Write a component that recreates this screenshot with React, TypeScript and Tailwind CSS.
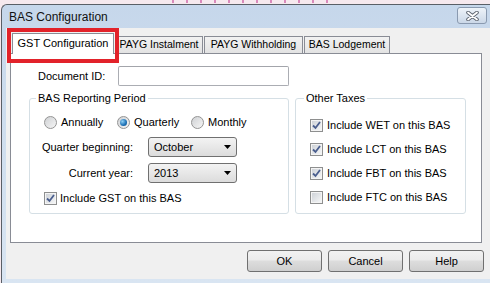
import React from "react";

function CheckBox({ checked }: { checked: boolean }) {
  return (
    <span className="flex h-[13px] w-[13px] shrink-0 items-center justify-center border border-[#8e8f8f] bg-white">
      <span className="flex h-[11px] w-[11px] items-center justify-center border border-[#f4f4f4] bg-gradient-to-br from-[#cfd3d8] to-[#f4f5f6]">
        {checked && (
          <svg width="9" height="9" viewBox="0 0 9 9">
            <path d="M1 4.5 L3.5 7 L8 1" fill="none" stroke="#4a5e8e" strokeWidth="1.8" />
          </svg>
        )}
      </span>
    </span>
  );
}

function Radio({ checked, label, width }: { checked: boolean; label: string; width: string }) {
  return (
    <div className={`flex items-center gap-[4px] ${width}`}>
      <span className="flex h-[13px] w-[13px] shrink-0 items-center justify-center rounded-full border border-[#949494] bg-gradient-to-br from-[#cfd1d4] to-[#f6f6f6]">
        {checked && (
          <span className="h-[7px] w-[7px] rounded-full bg-[radial-gradient(circle_at_35%_35%,#8fd0f5,#1a6fb5_60%,#0d4c86)]" />
        )}
      </span>
      <span>{label}</span>
    </div>
  );
}

function Combo({ value }: { value: string }) {
  return (
    <div className="flex h-[20px] w-[89px] items-center justify-between rounded-[3px] border border-[#707070] bg-gradient-to-b from-[#f3f3f3] to-[#dcdcdc] pl-[5px] pr-[5px]">
      <span>{value}</span>
      <svg width="7" height="4" viewBox="0 0 7 4">
        <polygon points="0,0 7,0 3.5,4" fill="#000" />
      </svg>
    </div>
  );
}

function Button({ label }: { label: string }) {
  return (
    <button
      type="button"
      className="flex h-[22px] w-[75px] items-center justify-center rounded-[3px] border border-[#707070] bg-[linear-gradient(#f2f2f2,#ebebeb_45%,#dddddd_50%,#cfcfcf)] text-[11px] text-black"
    >
      {label}
    </button>
  );
}

const tabs = [
  { label: "PAYG Instalment", w: "w-[88px]" },
  { label: "PAYG Withholding", w: "w-[99px]" },
  { label: "BAS Lodgement", w: "w-[86px]" },
];

export default function App() {
  return (
    <div className="h-[283px] w-[490px] overflow-hidden bg-[#f6e9ee] font-['Liberation_Sans',Arial,sans-serif] text-[11px] text-black">
      {/* desktop behind the dialog */}
      <div className="flex h-[4px] items-start gap-[12px] pl-[172px]">
        {[0, 1, 2, 3, 4, 5, 6, 7, 8, 9, 10, 11].map((i) => (
          <span key={i} className="h-[3px] w-[2px] bg-[#d98abb]" />
        ))}
      </div>

      <div className="ml-[1px] flex h-[279px] w-[489px] flex-col rounded-tl-[6px] border-l border-t border-[#5a5f66] bg-gradient-to-b from-[#c6d7eb] to-[#d9e5f2]">
        {/* title bar */}
        <div className="flex h-[23px] shrink-0 items-center pl-[7px]">
          <span className="text-[12px] text-[#111]">BAS Configuration</span>
          <div className="ml-auto mr-[3px] mt-[2px] flex h-[17px] w-[30px] items-center justify-center self-start rounded-[3px] border border-[#8a9ab0] bg-gradient-to-b from-[#eef3f9] to-[#cbd8e8]">
            <svg width="13" height="10" viewBox="0 0 13 10">
              <path d="M2 1.5 L11 8.5 M11 1.5 L2 8.5" stroke="#5d6470" strokeWidth="3.6" strokeLinecap="round" />
              <path d="M2 1.5 L11 8.5 M11 1.5 L2 8.5" stroke="#ffffff" strokeWidth="1.8" strokeLinecap="round" />
            </svg>
          </div>
        </div>

        {/* client area */}
        <div className="relative ml-[4px] flex h-[251px] flex-col bg-[#f0f0f0]">
          {/* red annotation around the active tab */}
          <div className="absolute left-[1px] top-0 z-20 h-[35px] w-[112px] border-[4px] border-[#e2222a]" />

          <div className="ml-[4px] mt-[5px] flex w-[472px] flex-col">
            {/* tab strip */}
            <div className="flex h-[20px] items-end pl-[2px]">
              <div className="relative z-10 -mb-px flex h-[21px] w-[102px] items-center justify-center border border-b-0 border-[#898c95] bg-white pb-[2px] text-[11px]">
                GST Configuration
              </div>
              {tabs.map((t) => (
                <div
                  key={t.label}
                  className={`ml-[1px] flex h-[17px] items-center justify-center border border-b-0 border-[#898c95] bg-gradient-to-b from-[#f2f2f2] to-[#e3e3e3] text-[10.5px] ${t.w}`}
                >
                  {t.label}
                </div>
              ))}
            </div>

            {/* tab page */}
            <div className="flex h-[190px] flex-col border border-[#898c95] bg-white">
              <div className="ml-[27px] mt-[12px] flex items-center">
                <span className="w-[80px]">Document ID:</span>
                <div className="h-[20px] w-[171px] rounded-[2px] border border-[#abadb3] border-t-[#a3a5ab] bg-white" />
              </div>

              <div className="ml-[18px] mt-[5px] flex gap-[6px]">
                <fieldset className="h-[123px] w-[260px] rounded-[3px] border border-[#d5dfe5]">
                  <legend className="ml-[6px] px-[2px] leading-[14px]">BAS Reporting Period</legend>
                  <div className="mt-[9px] flex h-[16px] items-center pl-[14px]">
                    <Radio checked={false} label="Annually" width="w-[73px]" />
                    <Radio checked={true} label="Quarterly" width="w-[74px]" />
                    <Radio checked={false} label="Monthly" width="w-[70px]" />
                  </div>
                  <div className="mt-[7px] flex items-center">
                    <span className="w-[103px] text-right">Quarter beginning:</span>
                    <div className="ml-[15px]">
                      <Combo value="October" />
                    </div>
                  </div>
                  <div className="mt-[6px] flex items-center">
                    <span className="w-[103px] text-right">Current year:</span>
                    <div className="ml-[15px]">
                      <Combo value="2013" />
                    </div>
                  </div>
                  <div className="mt-[7px] flex h-[16px] items-center gap-[3px] pl-[14px]">
                    <CheckBox checked={true} />
                    <span>Include GST on this BAS</span>
                  </div>
                </fieldset>

                <fieldset className="h-[123px] w-[171px] rounded-[3px] border border-[#d5dfe5]">
                  <legend className="ml-[8px] px-[2px] leading-[14px]">Other Taxes</legend>
                  <div className="mt-[12px] flex flex-col gap-[8px] pl-[14px]">
                    {[
                      { l: "Include WET on this BAS", c: true },
                      { l: "Include LCT on this BAS", c: true },
                      { l: "Include FBT on this BAS", c: true },
                      { l: "Include FTC on this BAS", c: false },
                    ].map((r) => (
                      <div key={r.l} className="flex h-[16px] items-center gap-[4px]">
                        <CheckBox checked={r.c} />
                        <span>{r.l}</span>
                      </div>
                    ))}
                  </div>
                </fieldset>
              </div>
            </div>
          </div>

          {/* dialog buttons */}
          <div className="mt-[7px] flex gap-[6px] pl-[241px]">
            <Button label="OK" />
            <Button label="Cancel" />
            <Button label="Help" />
          </div>
        </div>
      </div>
    </div>
  );
}
